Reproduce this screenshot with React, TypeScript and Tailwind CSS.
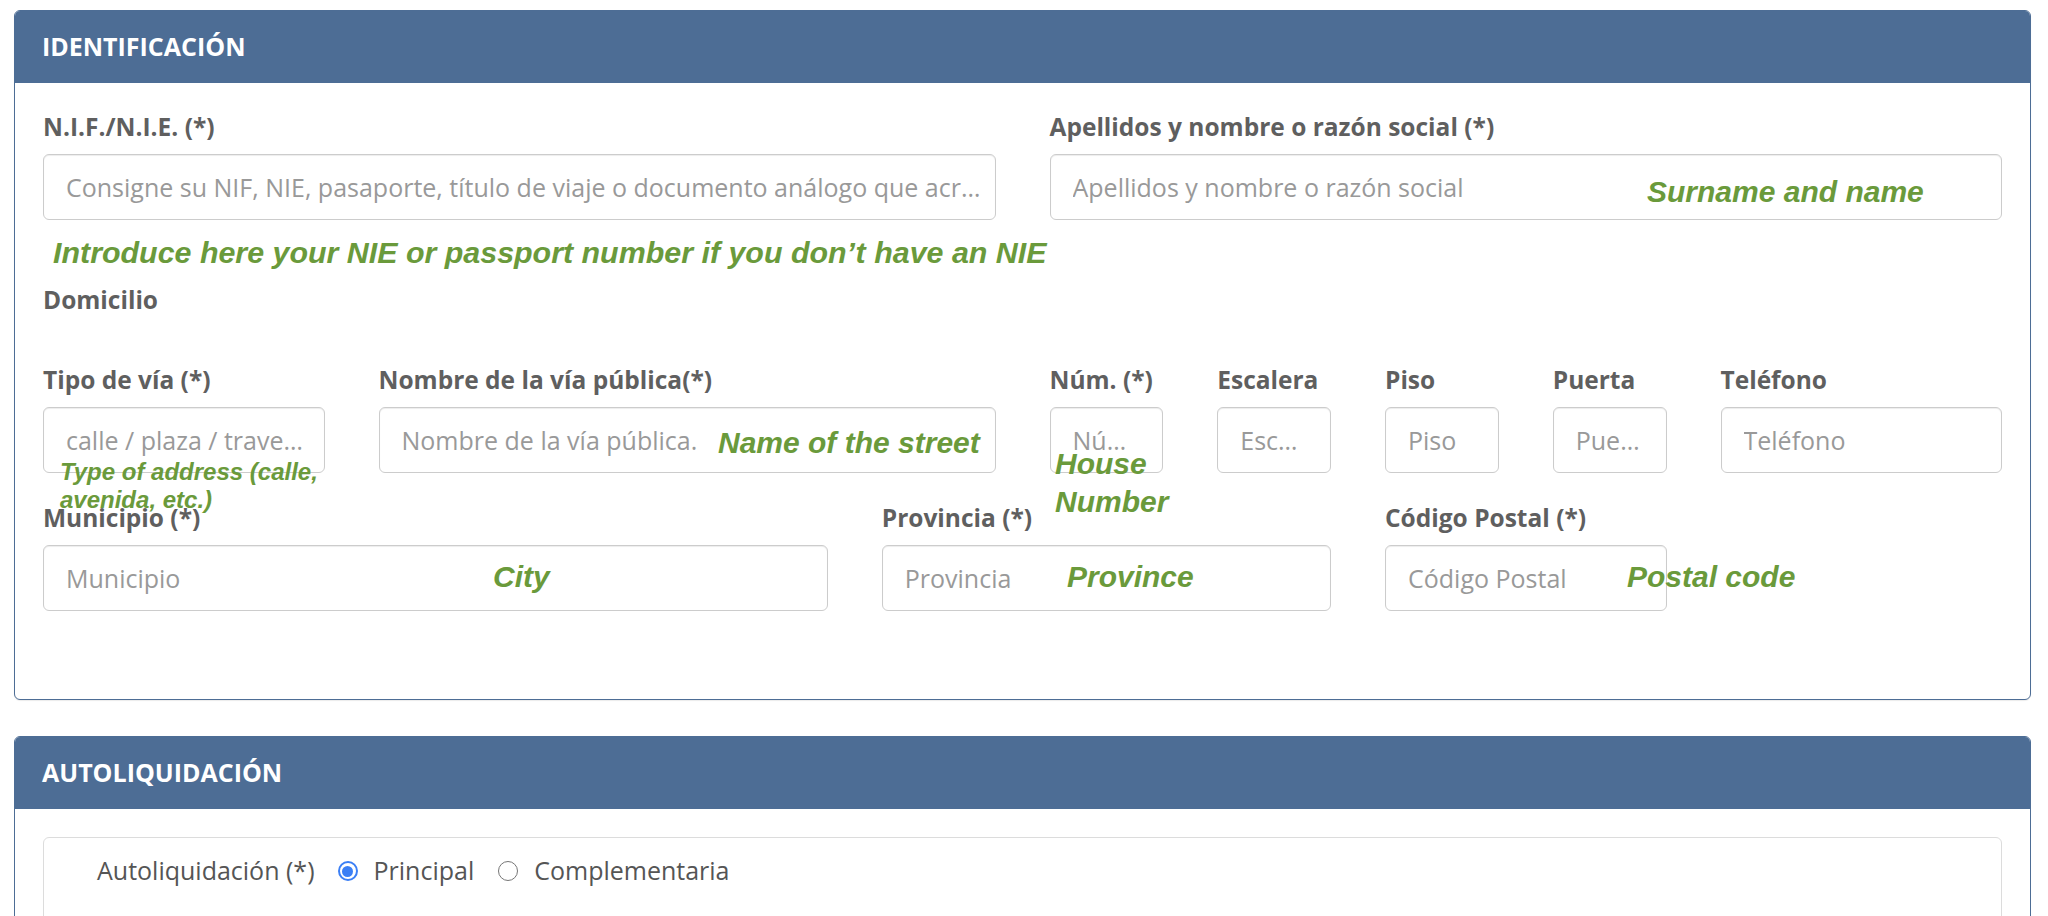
import React from "react";

const font = { fontFamily: '"Open Sans", "Noto Sans", sans-serif' };

function Label({ children }: { children: React.ReactNode }) {
  return (
    <div className="whitespace-nowrap text-[24.5px] font-bold leading-[28px] text-[#5f5f5f]">
      {children}
    </div>
  );
}

function Input({ placeholder }: { placeholder: string }) {
  return (
    <input
      type="text"
      placeholder={placeholder}
      className="block h-[66px] w-full min-w-0 overflow-hidden text-ellipsis whitespace-nowrap rounded-[6px] border border-[#cccccc] bg-white pl-[22px] pr-[6px] text-[25px] text-[#555] shadow-[inset_0_1px_1px_rgba(0,0,0,0.075)] outline-none placeholder:text-[#999]"
    />
  );
}

function Field({
  label,
  placeholder,
  span,
}: {
  label: string;
  placeholder: string;
  span: string;
}) {
  return (
    <div className={`flex min-w-0 flex-col gap-[13px] ${span}`}>
      <Label>{label}</Label>
      <Input placeholder={placeholder} />
    </div>
  );
}

function Note({
  children,
  className,
}: {
  children: React.ReactNode;
  className: string;
}) {
  return (
    <div
      className={`pointer-events-none absolute whitespace-nowrap font-bold italic text-[#6a9a3b] ${className}`}
      style={{ fontFamily: '"Liberation Sans", Arial, sans-serif' }}
    >
      {children}
    </div>
  );
}

function CardHeader({ title }: { title: string }) {
  return (
    <div className="flex h-[72px] items-center rounded-t-[5px] bg-[#4d6d95] px-[27px]">
      <h2 className="text-[25px] font-bold uppercase text-white">{title}</h2>
    </div>
  );
}

function Radio({ checked, label }: { checked: boolean; label: string }) {
  return (
    <label className="flex items-center gap-[16px]">
      {checked ? (
        <span className="flex h-[20px] w-[20px] items-center justify-center rounded-full border-[2px] border-[#3b7ff5] bg-white">
          <span className="h-[11px] w-[11px] rounded-full bg-[#3b7ff5]" />
        </span>
      ) : (
        <span className="h-[20px] w-[20px] rounded-full border border-[#767676] bg-white" />
      )}
      <span>{label}</span>
    </label>
  );
}

export default function App() {
  return (
    <div className="min-h-[1100px] bg-white pl-[14px] pr-[17px] pt-[10px]" style={font}>
      {/* IDENTIFICACIÓN */}
      <section className="rounded-[6px] border border-[#4d6d95] bg-white shadow-[0_1px_1px_rgba(0,0,0,0.08)]">
        <CardHeader title="Identificación" />
        <div className="relative px-[28px] pb-[88px] pt-[30px]">
          <div className="grid grid-cols-12 gap-x-[54px]">
            <Field
              span="col-span-6"
              label="N.I.F./N.I.E. (*)"
              placeholder="Consigne su NIF, NIE, pasaporte, título de viaje o documento análogo que acr…"
            />
            <Field
              span="col-span-6"
              label="Apellidos y nombre o razón social (*)"
              placeholder="Apellidos y nombre o razón social"
            />
          </div>

          <div className="mt-[66px]">
            <Label>Domicilio</Label>
          </div>

          <div className="mt-[52px] grid grid-cols-12 gap-x-[54px]">
            <Field span="col-span-2" label="Tipo de vía (*)" placeholder="calle / plaza / trave…" />
            <Field span="col-span-4" label="Nombre de la vía pública(*)" placeholder="Nombre de la vía pública." />
            <Field span="col-span-1" label="Núm. (*)" placeholder="Nú…" />
            <Field span="col-span-1" label="Escalera" placeholder="Esc…" />
            <Field span="col-span-1" label="Piso" placeholder="Piso" />
            <Field span="col-span-1" label="Puerta" placeholder="Pue…" />
            <Field span="col-span-2" label="Teléfono" placeholder="Teléfono" />
          </div>

          <div className="mt-[31px] grid grid-cols-12 gap-x-[54px]">
            <Field span="col-span-5" label="Municipio (*)" placeholder="Municipio" />
            <Field span="col-span-3" label="Provincia (*)" placeholder="Provincia" />
            <Field span="col-span-2" label="Código Postal (*)" placeholder="Código Postal" />
          </div>

          {/* annotations */}
          <Note className="left-[38px] top-[154px] text-[30.4px] leading-none">
            Introduce here your NIE or passport number if you don’t have an NIE
          </Note>
          <Note className="left-[1632px] top-[94px] text-[30px] leading-none">Surname and name</Note>
          <Note className="left-[703px] top-[345px] text-[30px] leading-none">Name of the street</Note>
          <Note className="left-[45px] top-[375px] text-[24px] leading-[28px]">
            Type of address (calle,
            <br />
            avenida, etc.)
          </Note>
          <Note className="left-[1040px] top-[362px] text-[30px] leading-[38px]">
            House
            <br />
            Number
          </Note>
          <Note className="left-[478px] top-[479px] text-[30px] leading-none">City</Note>
          <Note className="left-[1052px] top-[479px] text-[30px] leading-none">Province</Note>
          <Note className="left-[1612px] top-[479px] text-[30px] leading-none">Postal code</Note>
        </div>
      </section>

      {/* AUTOLIQUIDACIÓN */}
      <section className="mt-[36px] rounded-[6px] border border-[#4d6d95] bg-white">
        <CardHeader title="Autoliquidación" />
        <div className="px-[28px] pb-[40px] pt-[28px]">
          <div className="h-[200px] rounded-[6px] border border-[#dcdcdc] pl-[53px] pt-[17px]">
            <div className="flex h-[32px] items-center text-[25px] text-[#555]">
              <span>Autoliquidación (*)</span>
              <div className="ml-[23px] flex items-center gap-[24px]">
                <Radio checked label="Principal" />
                <Radio checked={false} label="Complementaria" />
              </div>
            </div>
          </div>
        </div>
      </section>
    </div>
  );
}
